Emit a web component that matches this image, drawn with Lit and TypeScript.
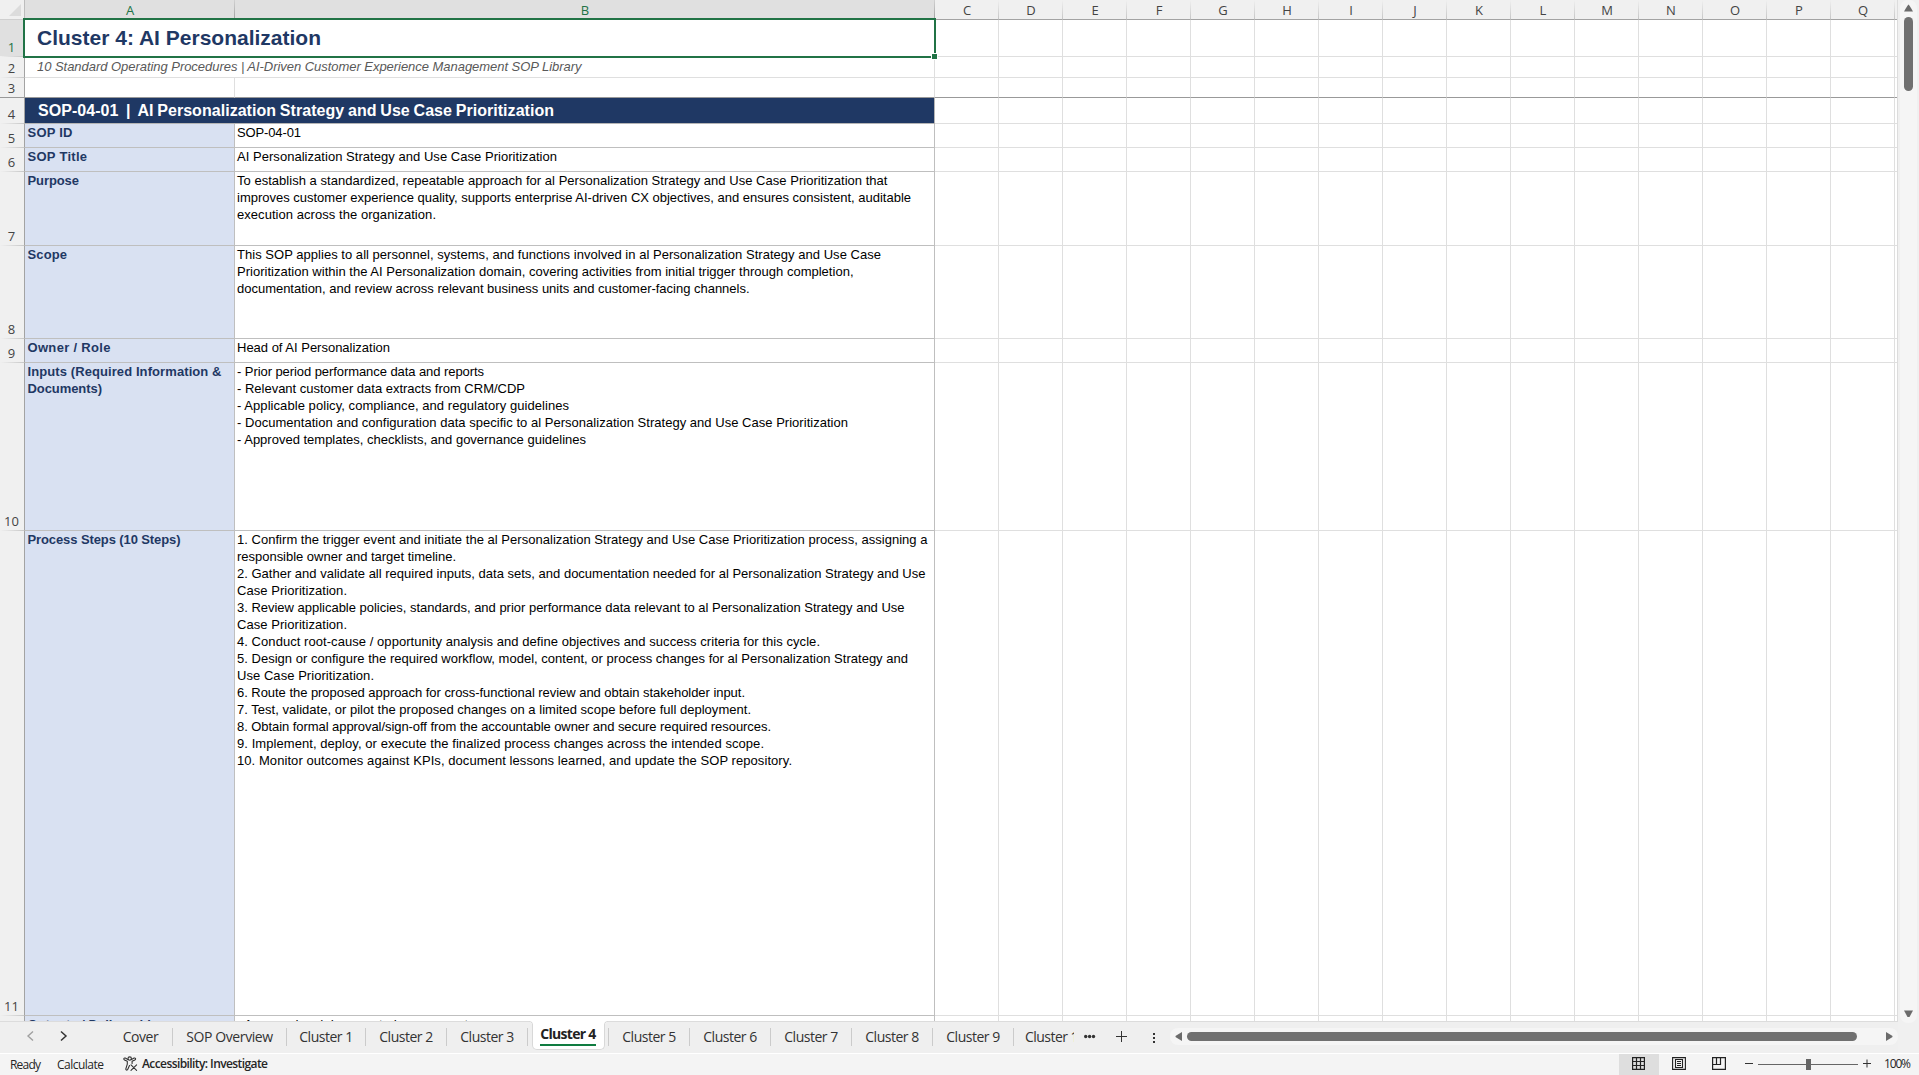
import { LitElement, html, css, svg, nothing } from "lit";
import { customElement, property } from "lit/decorators.js";
import { classMap } from "lit/directives/class-map.js";

/** A run of text tracked so that it fills the given width. */
@customElement("fit-text")
class FitText extends LitElement {
  @property() text = "";
  @property({ type: Number }) width = 0;

  static styles = css`
    :host { display: block; white-space: pre; }
    .run { display: inline-block; }
  `;

  protected updated() {
    const run = this.renderRoot.querySelector(".run") as HTMLElement;
    run.style.letterSpacing = "0px";
    if (!this.width || this.text.length < 2) return;
    const natural = run.getBoundingClientRect().width;
    run.style.letterSpacing = `${(this.width - natural) / (this.text.length - 1)}px`;
  }

  render() {
    return html`<span class="run">${this.text}</span>`;
  }
}

type Line = [string, number];
interface Row {
  n: number;
  h: number;
  kind: "title" | "subtitle" | "blank" | "section" | "field";
  a?: Line[];
  b?: Line[];
}

const ROWS: Row[] = [
  { n: 1, h: 37, kind: "title", a: [["Cluster 4: AI Personalization", 284]] },
  { n: 2, h: 21, kind: "subtitle", a: [["10 Standard Operating Procedures | AI-Driven Customer Experience Management SOP Library", 544.5]] },
  { n: 3, h: 20, kind: "blank" },
  { n: 4, h: 26, kind: "section", a: [["SOP-04-01  |  AI Personalization Strategy and Use Case Prioritization", 516]] },
  { n: 5, h: 24, kind: "field", a: [["SOP ID", 45]], b: [["SOP-04-01", 64]] },
  { n: 6, h: 24, kind: "field", a: [["SOP Title", 59.5]], b: [["AI Personalization Strategy and Use Case Prioritization", 320]] },
  {
    n: 7, h: 74, kind: "field", a: [["Purpose", 51.5]],
    b: [
      ["To establish a standardized, repeatable approach for al Personalization Strategy and Use Case Prioritization that", 650.5],
      ["improves customer experience quality, supports enterprise AI-driven CX objectives, and ensures consistent, auditable", 674],
      ["execution across the organization.", 199],
    ],
  },
  {
    n: 8, h: 93, kind: "field", a: [["Scope", 39.5]],
    b: [
      ["This SOP applies to all personnel, systems, and functions involved in al Personalization Strategy and Use Case", 644],
      ["Prioritization within the AI Personalization domain, covering activities from initial trigger through completion,", 616.5],
      ["documentation, and review across relevant business units and customer-facing channels.", 512.5],
    ],
  },
  { n: 9, h: 24, kind: "field", a: [["Owner / Role", 83]], b: [["Head of AI Personalization", 153]] },
  {
    n: 10, h: 168, kind: "field", a: [["Inputs (Required Information &", 194], ["Documents)", 74.5]],
    b: [
      ["- Prior period performance data and reports", 247],
      ["- Relevant customer data extracts from CRM/CDP", 288],
      ["- Applicable policy, compliance, and regulatory guidelines", 332],
      ["- Documentation and configuration data specific to al Personalization Strategy and Use Case Prioritization", 611],
      ["- Approved templates, checklists, and governance guidelines", 349],
    ],
  },
  {
    n: 11, h: 485, kind: "field", a: [["Process Steps (10 Steps)", 153]],
    b: [
      ["1. Confirm the trigger event and initiate the al Personalization Strategy and Use Case Prioritization process, assigning a", 690.5],
      ["responsible owner and target timeline.", 219],
      ["2. Gather and validate all required inputs, data sets, and documentation needed for al Personalization Strategy and Use", 688.5],
      ["Case Prioritization.", 110],
      ["3. Review applicable policies, standards, and prior performance data relevant to al Personalization Strategy and Use", 667.5],
      ["Case Prioritization.", 110],
      ["4. Conduct root-cause / opportunity analysis and define objectives and success criteria for this cycle.", 583],
      ["5. Design or configure the required workflow, model, content, or process changes for al Personalization Strategy and", 671],
      ["Use Case Prioritization.", 137],
      ["6. Route the proposed approach for cross-functional review and obtain stakeholder input.", 508],
      ["7. Test, validate, or pilot the proposed changes on a limited scope before full deployment.", 514],
      ["8. Obtain formal approval/sign-off from the accountable owner and secure required resources.", 534],
      ["9. Implement, deploy, or execute the finalized process changes across the intended scope.", 527],
      ["10. Monitor outcomes against KPIs, document lessons learned, and update the SOP repository.", 555],
    ],
  },
  { n: 12, h: 30, kind: "field", a: [["Outputs / Deliverables", 138]], b: [["- Approved and documented assessment", 231]] },
];

const COLS = "CDEFGHIJKLMNOPQ".split("");

@customElement("app-root")
class AppRoot extends LitElement {
  static styles = css`
    :host {
      display: flex;
      flex-direction: column;
      width: 1919px;
      height: 1075px;
      overflow: hidden;
      background: #f0f0f0;
      font-family: "Open Sans", "Noto Sans", sans-serif;
      color: #333;
    }
    * { box-sizing: border-box; }
    .main { display: flex; height: 1021px; flex: none; }
    .sheet {
      width: 1898px;
      height: 1021px;
      overflow: hidden;
      background: #fff;
      border-right: 1px solid #dcdcdc;
      position: relative;
    }
    .line { display: grid; grid-template-columns: 25px 210px 700px repeat(15, 64px) 1fr; }
    .line > * { min-width: 0; }

    .heads { height: 20px; background: #f0f0f0; font-size: 13px; line-height: 20px; text-align: center; color: #444; }
    .heads > * { border-bottom: 1px solid #a3a3a3; display: flex; justify-content: center; height: 20px; }
    .heads .col {
      padding-left: 1px;
      border-right: 1px solid transparent;
      background: linear-gradient(#f0f0f0, #c4c4c4) right / 1px 100% no-repeat border-box;
    }
    .heads .sel { background-color: #e0e0e0; color: #217346; background-image: linear-gradient(#d2d2d2, #a0a0a0); }
    .heads .corner { justify-content: flex-end; padding: 4px 3px 0 0; border-right: 1px solid #bdbdbd; border-bottom-color: #cfcfcf; }
    .heads svg { display: block; }

    .num {
      display: flex;
      align-items: flex-end;
      justify-content: center;
      padding-right: 1px;
      background: linear-gradient(to right, #f0f0f0, #c6c6c6) bottom / 100% 1px no-repeat border-box #f0f0f0;
      border-right: 1px solid #a3a3a3;
      border-bottom: 1px solid transparent;
      font-size: 13px;
      line-height: 18px;
      color: #444;
    }
    .num.sel { background-color: #e0e0e0; color: #217346; }
    .cell { border-right: 1px solid #dfdfdf; border-bottom: 1px solid #dfdfdf; overflow: hidden; }
    .rest { border-bottom: 1px solid #dfdfdf; }
    .merged { grid-column: span 2; }
    .blank .cell, .blank .rest { border-bottom-color: #999; }
    .blank .num { border-bottom-color: #999; }

    .text { font-family: "Liberation Sans", Arial, sans-serif; font-size: 13px; line-height: 17px; color: #000; }
    .title .text { font-size: 21px; line-height: 36px; font-weight: 700; color: #1f3864; padding-left: 12px; }
    .subtitle .text { font-style: italic; line-height: 19px; color: #595959; padding-left: 12px; }
    .section .text {
      background: #1f3864; color: #fff; font-size: 16px; line-height: 25px; font-weight: 700;
      padding-left: 13px; border-color: #b5b5b5; word-spacing: -0.7px;
    }
    .field .label { background: #d9e1f2; color: #1f3864; font-weight: 700; padding-left: 2.5px; border-color: #bfbfbf; }
    .field .value { padding-left: 2px; border-color: #bfbfbf; }

    .selection {
      position: absolute; left: 23px; top: 18px; width: 913px; height: 40px;
      border: 2px solid #217346; pointer-events: none;
    }
    .handle {
      position: absolute; left: 931px; top: 53px; width: 7px; height: 7px;
      background: #217346; border: 1px solid #fff;
    }

    .vscroll {
      width: 17px; margin-left: 2px; height: 1023px; border-radius: 8px; background: #f5f5f5;
      display: flex; flex-direction: column; align-items: center; flex: none; padding: 4px 0 5px;
    }
    .vthumb { width: 9px; height: 74px; border-radius: 5px; background: #707070; margin: 5px 0 auto; }

    .tabs { display: flex; height: 32px; flex: none; border-top: 1px solid #dcdcdc; background: #efefef; font-size: 14px; width: 1898px; }
    .nav { width: 109px; display: flex; gap: 22px; padding: 8px 0 0 26px; flex: none; }
    .tab { height: 31px; display: flex; justify-content: center; line-height: 19px; padding: 5px 1px 0 0; flex: none; }
    .tab.sep { background: linear-gradient(#cbcbcb, #cbcbcb) right 6px / 1px 18px no-repeat; }
    .active {
      width: 73px; height: 29px; margin: -1px 0 0 4px; background: #fff; flex: none; position: relative;
      border: 1px solid #d8d8d8; border-top: 0; border-radius: 0 0 5px 5px;
      display: flex; flex-direction: column; align-items: center; padding: 3px 1px 0 0;
      font-weight: 700; color: #222; line-height: 19px;
    }
    .active::before, .active::after {
      content: ""; position: absolute; top: 0; width: 4px; height: 4px;
    }
    .active::before { left: -4px; background: radial-gradient(circle at 0 100%, #efefef 3px, #d8d8d8 3.5px, #fff 4.5px); }
    .active::after { right: -4px; background: radial-gradient(circle at 100% 100%, #efefef 3px, #d8d8d8 3.5px, #fff 4.5px); }
    .under { width: 56px; height: 2px; margin-top: 1px; background: #107c41; }
    .spacer { width: 4px; flex: none; background: linear-gradient(#cbcbcb, #cbcbcb) right 6px / 1px 18px no-repeat; }
    .clip { width: 60px; overflow: hidden; justify-content: flex-start; padding-left: 11px; }
    .tools { width: 96px; flex: none; }
    .hscroll {
      width: 728px; height: 17px; margin-top: 6px; border-radius: 8px; background: #f5f5f5; flex: none;
      display: flex; align-items: center; padding: 0 5px;
    }
    .hthumb { width: 670px; height: 9px; border-radius: 5px; background: #707070; margin: 0 auto 0 5px; }

    .status {
      height: 22px; flex: none; border-top: 1px solid #fff; background: #f4f4f4; display: flex;
      font-size: 12px; line-height: 20px; color: #262626;
    }
    .status > * { flex: none; }
    .ready { width: 47px; margin-left: 10px; padding-top: 1px; }
    .calc { width: 66px; padding-top: 1px; }
    .acc { width: 1496px; display: flex; gap: 4px; font-weight: 600; }
    .acc svg { margin-top: 2px; flex: none; }
    .views { display: flex; }
    .view { width: 40px; height: 21px; padding: 3px 0 0 13px; }
    .view.on { background: #dedede; }
    .view svg, .zoom svg { display: block; }
    .zoom { width: 145px; }
    .pct { width: 35px; }
  `;

  private lines(lines?: Line[]) {
    return lines?.map(([t, w]) => html`<fit-text .text=${t} .width=${w}></fit-text>`) ?? nothing;
  }

  private row(r: Row) {
    const pair = r.kind === "field" || r.kind === "blank";
    return html`<div class="line ${r.kind}" style="height:${r.h}px">
      <div class=${classMap({ num: true, sel: r.n === 1 })}>${r.n}</div>
      ${pair
        ? html`<div class="cell text label">${this.lines(r.a)}</div>
            <div class="cell text value">${this.lines(r.b)}</div>`
        : html`<div class="cell text merged">${this.lines(r.a)}</div>`}
      ${COLS.map(() => html`<div class="cell"></div>`)}
      <div class="rest"></div>
    </div>`;
  }

  private tab(label: string, cell: number, width: number) {
    return html`<div class="tab sep" style="width:${cell}px"><fit-text .text=${label} .width=${width}></fit-text></div>`;
  }

  render() {
    const tri = (d: string, w: number, h: number) =>
      html`<svg width=${w} height=${h} viewBox="0 0 ${w} ${h}">${svg`<path d=${d} fill="#6b6b6b" />`}</svg>`;
    return html`
      <div class="main">
        <div class="sheet">
          <div class="line heads">
            <div class="corner"><svg width="12" height="12"><path d="M12 0V12H0Z" fill="#dcdcdc" /></svg></div>
            <div class="col sel">A</div>
            <div class="col sel">B</div>
            ${COLS.map((c) => html`<div class="col">${c}</div>`)}
            <div></div>
          </div>
          ${ROWS.map((r) => this.row(r))}
          <div class="selection"></div>
          <div class="handle"></div>
        </div>
        <div class="vscroll">
          ${tri("M4.5 0.5Q5 .5 9 7.5H0Q4 .5 4.5 .5Z", 9, 8)}
          <div class="vthumb"></div>
          ${tri("M0 0.5H9L5.5 7H3.5Z", 9, 8)}
        </div>
      </div>

      <div class="tabs">
        <div class="nav">
          <svg width="8" height="12" fill="none" stroke="#a0a0a0" stroke-width="1.4"><path d="M7 1.5L2 6L7 10.5" /></svg>
          <svg width="8" height="12" fill="none" stroke="#333" stroke-width="1.5" style="margin-left:4px"><path d="M1 1.5L6 6L1 10.5" /></svg>
        </div>
        ${this.tab("Cover", 64, 36)}
        ${this.tab("SOP Overview", 114, 87)}
        ${this.tab("Cluster 1", 79, 54)}
        ${this.tab("Cluster 2", 81, 54)}
        ${this.tab("Cluster 3", 81, 54)}
        <div class="active">
          <fit-text .text=${"Cluster 4"} .width=${56}></fit-text>
          <div class="under"></div>
        </div>
        <div class="spacer"></div>
        ${["5", "6", "7", "8", "9"].map((n) => this.tab(`Cluster ${n}`, 81, 54))}
        <div class="tab clip"><fit-text .text=${"Cluster 10"} .width=${61}></fit-text></div>
        <svg class="tools" width="96" height="31" viewBox="10 0 96 31">
          <g fill="#333">
            <circle cx="21.7" cy="14.5" r="1.7" /><circle cx="25.6" cy="14.5" r="1.7" /><circle cx="29.5" cy="14.5" r="1.7" />
            <rect x="89" y="11" width="2" height="2" /><rect x="89" y="15" width="2" height="2" /><rect x="89" y="19" width="2" height="2" />
          </g>
          <path d="M52 14.5H63M57.5 9V20" stroke="#333" />
        </svg>
        <div class="hscroll">
          ${tri("M7 0V9L.8 5.2Q0 4.5 .8 3.8Z", 7, 9)}
          <div class="hthumb"></div>
          ${tri("M0 0V9L6.2 5.2Q7 4.5 6.2 3.8Z", 7, 9)}
        </div>
      </div>

      <div class="status">
        <div class="ready"><fit-text .text=${"Ready"} .width=${31}></fit-text></div>
        <div class="calc"><fit-text .text=${"Calculate"} .width=${47}></fit-text></div>
        <div class="acc">
          <svg width="15" height="16" fill="none" stroke="#333" stroke-width="1.1" stroke-linecap="round" stroke-linejoin="round">
            <circle cx="6.7" cy="2.6" r="1.7" />
            <path d="M4.9 3.4L2.3 2.1C1 1.6.2 3.3 1.5 3.9L4.3 5.3V8.2L2.9 12.7C2.5 14.2 4.2 14.7 4.7 13.4L6.5 9.6M8.5 3.4L11.1 2.1C12.4 1.6 13.2 3.3 11.9 3.9L9.1 5.3V7.5" />
            <path d="M8 8.8L13.6 14.4M13.6 8.8L8 14.4" />
          </svg>
          <fit-text .text=${"Accessibility: Investigate"} .width=${126}></fit-text>
        </div>
        <div class="views">
          <div class="view on">
            <svg width="14" height="14" fill="none" stroke="#222" stroke-width="1.2"><path d="M.6 .6H12.4V12.4H.6ZM4.5 .6V12.4M8.5 .6V12.4M.6 4.5H12.4M.6 8.5H12.4" /></svg>
          </div>
          <div class="view">
            <svg width="14" height="14" fill="none" stroke="#222" stroke-width="1.1"><path d="M.6 .6H13.4V12.4H.6ZM3.5 2.5H10.5V10.5H3.5ZM5 4.5H9M5 6.5H9M5 8.5H9" /></svg>
          </div>
          <div class="view">
            <svg width="14" height="14" fill="none" stroke="#222" stroke-width="1.2"><path d="M.6 .6H13.4V12.4H.6ZM4.5 .6V7.5H8.5V.6M8.5 7.5H.6" /></svg>
          </div>
        </div>
        <svg class="zoom" width="145" height="21">
          <path d="M6 9.5H14M124 9.5H132M128 5.5V13.5" stroke="#333" />
          <path d="M19 10.5H119" stroke="#666" />
          <rect x="67" y="5" width="5" height="11" fill="#666" />
        </svg>
        <div class="pct"><fit-text .text=${"100%"} .width=${27}></fit-text></div>
      </div>
    `;
  }
}
